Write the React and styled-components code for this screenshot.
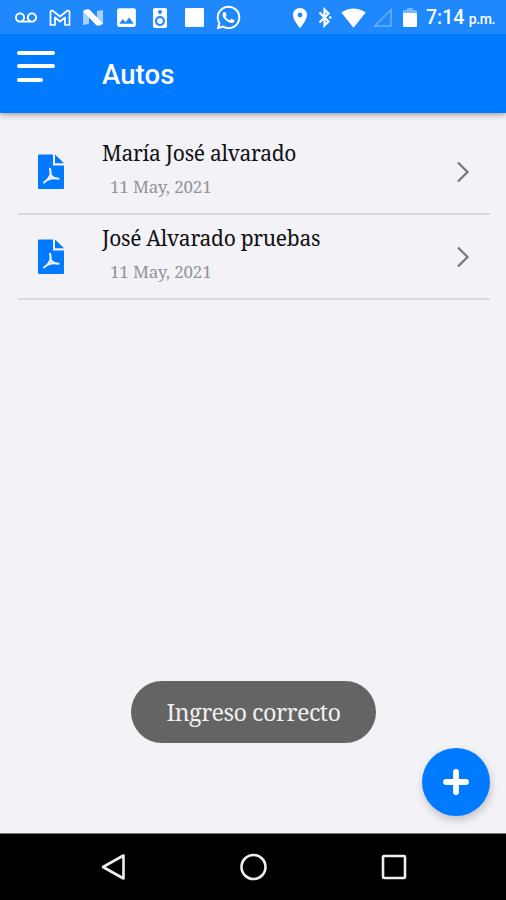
import styled, { createGlobalStyle } from "styled-components";
import { MdVoicemail, MdImage, MdSpeaker, MdLocationOn } from "react-icons/md";
import { FaWhatsapp } from "react-icons/fa";


const autos = [
    { id: 1, name: "María José alvarado", date: "11 May, 2021" },
    { id: 2, name: "José Alvarado pruebas", date: "11 May, 2021" },
];

export const StatusBar = () => {
    return (
        <StatusBarWrapper>
            <StatusSlot $width={36}><MdVoicemail size={22} /></StatusSlot>
            <StatusSlot $width={32}>
                <svg width="22" height="18" viewBox="0 0 22 18" fill="none" stroke="currentColor" strokeWidth="1.7" strokeLinejoin="round">
                    <path d="M1.5 16V3Q1.5 1.5 3.5 1.5L11 7.5L18.5 1.5Q20.5 1.5 20.5 3V16H16V8.5L11 12.5L6 8.5V16Z" />
                </svg>
            </StatusSlot>
            <StatusSlot $width={34}>
                <svg width="20" height="17" viewBox="0 0 20 17" fill="currentColor">
                    <path d="M0 2L6 0V15L0 16ZM14 2L20 1V15L14 17Z" opacity="0.6" />
                    <path d="M0 2Q3 -1 7 1L20 14.5Q17 17.5 13 16Z" />
                </svg>
            </StatusSlot>
            <StatusSlot $width={33}><MdImage size={25} /></StatusSlot>
            <StatusSlot $width={34}><MdSpeaker size={24} /></StatusSlot>
            <StatusSlot $width={34}><WhiteSquare /></StatusSlot>
            <StatusSlot $width={34}><FaWhatsapp size={27} /></StatusSlot>
            <Spacer />
            <StatusSlot $width={24}><MdLocationOn size={24} /></StatusSlot>
            <StatusSlot $width={26}>
                <svg width="14" height="21" viewBox="0 0 14 21" fill="none" stroke="currentColor" strokeWidth="2.2">
                    <path d="M1.5 5.5L10.5 14.5L6.5 18.5V2.5L10.5 6.5L1.5 15.5" />
                    <path d="M11 10.5H13.5" />
                </svg>
            </StatusSlot>
            <StatusSlot $width={31}>
                <svg width="25" height="20" viewBox="0 0 25 20" fill="currentColor">
                    <path d="M0.3 4.5Q12.5 -3.6 24.7 4.5L12.5 19.8Z" />
                </svg>
            </StatusSlot>
            <StatusSlot $width={27}>
                <svg width="19" height="19" viewBox="0 0 19 19" fill="none" stroke="currentColor" strokeWidth="1.5" opacity="0.35">
                    <path d="M1.8 18L18 1.8V18Z" />
                </svg>
            </StatusSlot>
            <StatusSlot $width={27}>
                <svg width="14" height="19" viewBox="0 0 14 19" fill="currentColor">
                    <path d="M0 5V3Q0 2 1 2H4V0H10V2H13Q14 2 14 3V5Z" opacity="0.4" />
                    <path d="M0 5H14V18Q14 19 13 19H1Q0 19 0 18Z" />
                </svg>
            </StatusSlot>
            <Clock>7:14<small>p.m.</small></Clock>
        </StatusBarWrapper>
    );
};

export const PdfIcon = () => {
    return (
        <svg width="26" height="35" viewBox="0 0 26 35">
            <path d="M1 0.5H15V11.5H26V34Q26 35 25 35H1Q0 35 0 34V1.5Q0 0.5 1 0.5Z" fill="#007aff" />
            <path d="M17 0.5L26 9.3H17Z" fill="#007aff" />
            <path d="M12 14.8Q12.8 18 12.5 20.5Q11 25 6 28.5M12.5 20.5Q14.5 24.5 20.5 24.7M9 26Q13 23.8 17 24.2" fill="none" stroke="#f2f2f7" strokeWidth="2.1" strokeLinecap="round" />
        </svg>
    );
};

export const AutoItem = ({ auto }) => {

    const { name, date } = auto;

    return (
        <AutoItemWrapper>
            <PdfIcon />
            <div className="auto-text">
                <h2>{name}</h2>
                <p>{date}</p>
            </div>
            <svg className="arrow" width="14" height="22" viewBox="0 0 14 22">
                <path d="M2 1.5L11.5 11L2 20.5" fill="none" stroke="#77777b" strokeWidth="2.2" />
            </svg>
        </AutoItemWrapper>
    );
};

export default function App() {
    return (
        <Screen>
            <GlobalStyle />
            <StatusBar />
            <Header>
                <MenuButton aria-label="menu">
                    <MenuLine $width={38} />
                    <MenuLine $width={38} />
                    <MenuLine $width={26} />
                </MenuButton>
                <h1>Autos</h1>
            </Header>
            <Content>
                {autos.map((auto) => (
                    <AutoItem key={auto.id} auto={auto} />
                ))}
                <Toast>Ingreso correcto</Toast>
                <AddButton aria-label="add">
                    <svg width="26" height="26" viewBox="0 0 26 26">
                        <path d="M13 3V23M3 13H23" stroke="white" strokeWidth="5.8" strokeLinecap="round" />
                    </svg>
                </AddButton>
            </Content>
            <NavBar>
                <svg width="26" height="28" viewBox="0 0 26 28">
                    <path d="M3 14L23.5 2.5V25.5Z" />
                </svg>
                <svg width="28" height="28" viewBox="0 0 28 28">
                    <circle cx="13.5" cy="14" r="12" />
                </svg>
                <svg width="26" height="26" viewBox="0 0 26 26">
                    <rect x="2" y="2" width="22" height="22" rx="1" />
                </svg>
            </NavBar>
        </Screen>
    );
}

const GlobalStyle = createGlobalStyle`
    body {
        margin: 0;
    }

    * {
        box-sizing: border-box;
    }
`;

const Screen = styled.div`
    display: flex;
    flex-direction: column;
    width: 506px;
    height: 900px;
    overflow: hidden;
    background-color: #f2f2f7;
    font-family: "Noto Serif", "DejaVu Serif Condensed", "DejaVu Serif", serif;
    font-stretch: condensed;
`;

const StatusBarWrapper = styled.div`
    display: flex;
    align-items: center;
    height: 34px;
    padding: 1px 11px 0 8px;
    background-color: #1e88fc;
    color: white;
    z-index: 2;
`;

const StatusSlot = styled.div`
    display: flex;
    justify-content: center;
    flex-shrink: 0;
    width: ${({ $width }) => $width}px;
`;

const WhiteSquare = styled.span`
    width: 19px;
    height: 19px;
    border-radius: 1px;
    background-color: white;
`;

const Spacer = styled.div`
    flex: 1;
`;

const Clock = styled.div`
    display: flex;
    align-items: baseline;
    justify-content: space-between;
    width: 69px;
    margin: 2px 0 0 3px;
    font-family: Roboto, sans-serif;
    font-size: 19.5px;
    font-stretch: normal;
    font-weight: 500;
    line-height: 26px;

    small {
        font-size: 14px;
        letter-spacing: -0.4px;
    }
`;

const Header = styled.header`
    display: flex;
    height: 79px;
    padding-left: 17px;
    background-color: #007aff;
    color: white;
    box-shadow: 0 1px 6px rgba(80, 40, 40, 0.55);
    z-index: 1;

    h1 {
        margin: 24px 0 0 46px;
        font-family: Roboto, sans-serif;
        font-size: 27.5px;
        font-stretch: normal;
        font-weight: 500;
        letter-spacing: 0.1px;
        line-height: 34px;
    }
`;

const MenuButton = styled.button`
    display: flex;
    flex-direction: column;
    gap: 9.4px;
    width: 39px;
    padding: 17px 0 0;
    border: 0;
    background: none;
`;

const MenuLine = styled.span`
    width: ${({ $width }) => $width}px;
    height: 4px;
    border-radius: 2px;
    background-color: white;
`;

const Content = styled.main`
    position: relative;
    flex: 1;
    padding: 17px 16px 0 18px;
`;

const AutoItemWrapper = styled.div`
    display: flex;
    align-items: center;
    height: 85px;
    padding: 0 20px;
    border-bottom: 2px solid #d8d8dd;

    .auto-text {
        flex: 1;
        margin: -3px 0 0 38px;
    }

    h2 {
        margin: 0;
        color: #111;
        font-size: 21px;
        font-weight: 400;
        letter-spacing: -0.3px;
        line-height: 34px;
    }

    p {
        margin: 0 0 0 8px;
        color: #929296;
        font-size: 17px;
        letter-spacing: -0.15px;
        line-height: 34px;
    }
`;

const Toast = styled.div`
    position: absolute;
    left: 131px;
    bottom: 90px;
    width: 245px;
    height: 62px;
    border-radius: 31px;
    background-color: #646464;
    color: #efefef;
    font-size: 23.5px;
    letter-spacing: -0.6px;
    line-height: 62px;
    text-align: center;
`;

const AddButton = styled.button`
    position: absolute;
    right: 16px;
    bottom: 17px;
    display: flex;
    align-items: center;
    justify-content: center;
    width: 68px;
    height: 68px;
    padding: 0;
    border: 0;
    border-radius: 50%;
    background-color: #007aff;
    box-shadow: 1px 4px 8px rgba(0, 0, 0, 0.2);
`;

const NavBar = styled.nav`
    display: flex;
    align-items: center;
    justify-content: space-between;
    height: 67px;
    padding: 0 99px 0 100px;
    border-top: 1px solid #777;
    background-color: black;

    svg {
        fill: none;
        stroke: #eee;
        stroke-width: 2.6;
        stroke-linejoin: round;
    }
`;
